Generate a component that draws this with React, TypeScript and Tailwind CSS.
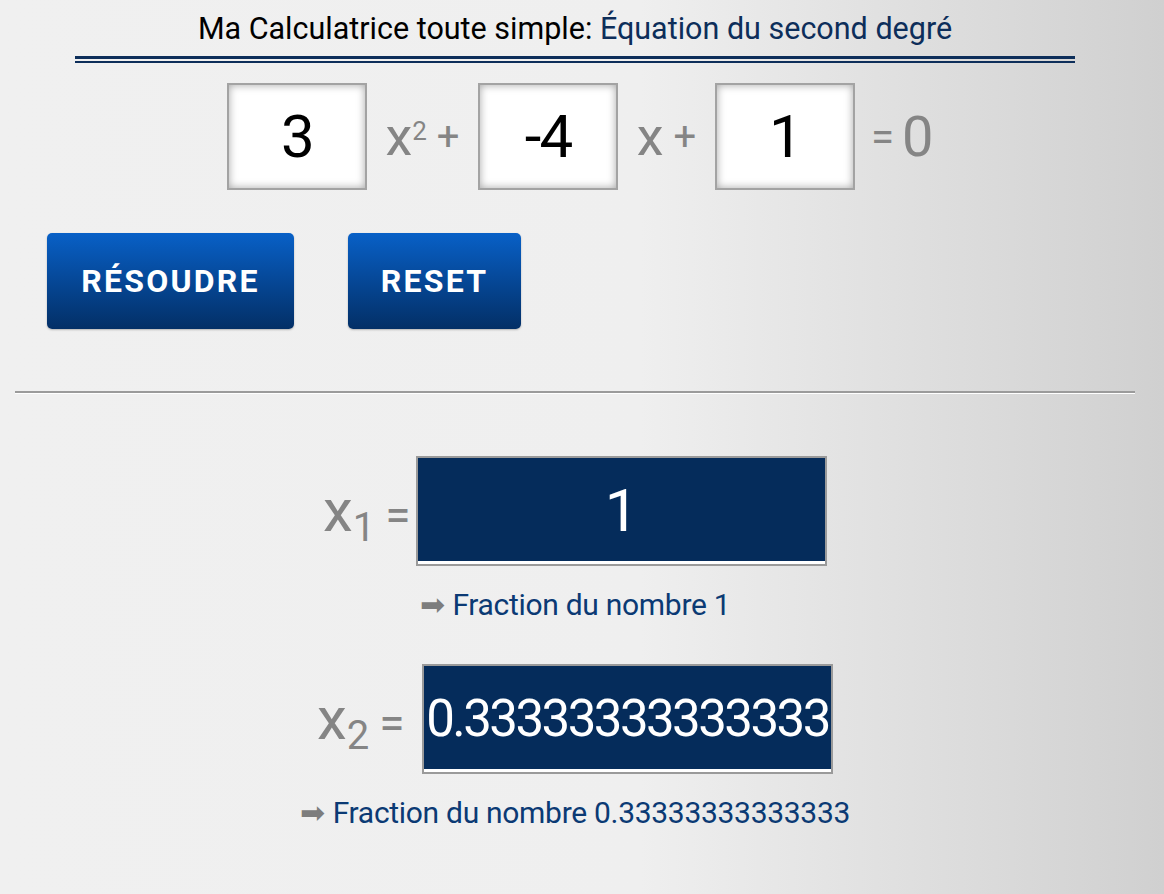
import React from "react";

const font = { fontFamily: 'Roboto, "Liberation Sans", sans-serif' };

function CoefBox({ value }: { value: string }) {
  return (
    <div className="flex h-[107px] w-[140px] items-center justify-center border-2 border-[#a3a3a3] bg-white text-[60px] tracking-[-0.03em] text-black shadow-[inset_0_0_9px_rgba(0,0,0,0.35)]">
      {value}
    </div>
  );
}

function Result({
  sub,
  value,
  fraction,
  labelWidth,
  size,
}: {
  sub: string;
  value: string;
  fraction: string;
  labelWidth: string;
  size: string;
}) {
  return (
    <div className="flex flex-col items-center">
      <div className="flex items-center">
        <span className={`flex items-baseline text-[60px] leading-none text-[#858585] ${labelWidth}`}>
          x
          <sub className="relative top-[10px] text-[40px] leading-none">{sub}</sub>
          <span className="ml-[10px] text-[46px]">=</span>
        </span>
        <div
          className={`flex h-[110px] w-[411px] items-center justify-center overflow-hidden whitespace-nowrap border-2 border-[#9a9a9a] bg-[#052c5b] text-white shadow-[inset_0_-3px_0_#ffffff] ${size}`}
        >
          {value}
        </div>
      </div>
      <p className="mt-[22px] text-[30px] leading-[34px] tracking-[-0.01em] text-[#0b3a74]">
        <span className="mr-[8px] text-[#7d7d7d]">➡</span>
        {fraction}
      </p>
    </div>
  );
}

export default function App() {
  return (
    <div
      className="min-h-[894px] w-full bg-[linear-gradient(to_right,#f0f0f0_0%,#efefef_55%,#d0d0d0_100%)] pt-[10px]"
      style={font}
    >
      <div className="ml-[15px] w-[1120px]">
        <h1 className="text-center text-[30.5px] leading-[38px] text-black">
          Ma Calculatrice toute simple: <span className="text-[#0d2e5a]">Équation du second degré</span>
        </h1>

        <div className="mx-[60px] mt-[8px] flex flex-col gap-[2px]">
          <div className="h-[3px] bg-[#0d2e5a]" />
          <div className="h-[2px] bg-[#0d2e5a]" />
        </div>

        <div className="ml-[212px] mt-[20px] flex items-center">
          <CoefBox value="3" />
          <span className="flex w-[111px] items-center justify-center text-[54px] text-[#858585]">
            x<sup className="relative -top-[6px] text-[26px]">2</sup>
            <span className="ml-[10px] text-[40px]">+</span>
          </span>
          <CoefBox value="-4" />
          <span className="flex w-[97px] items-center justify-center text-[54px] text-[#858585]">
            x<span className="ml-[10px] text-[40px]">+</span>
          </span>
          <CoefBox value="1" />
          <span className="ml-[16px] flex items-center text-[56px] text-[#858585]">
            <span className="text-[42px]">=</span>
            <span className="ml-[8px]">0</span>
          </span>
        </div>

        <div className="ml-[32px] mt-[43px] flex gap-[54px]">
          <button className="h-[96px] w-[247px] rounded-[5px] bg-[linear-gradient(to_bottom,#0860c7,#032f66)] text-[32px] font-bold tracking-[0.07em] text-white shadow-[0_1px_2px_rgba(0,0,0,0.25)]">
            RÉSOUDRE
          </button>
          <button className="h-[96px] w-[173px] rounded-[5px] bg-[linear-gradient(to_bottom,#0860c7,#032f66)] text-[32px] font-bold tracking-[0.07em] text-white shadow-[0_1px_2px_rgba(0,0,0,0.25)]">
            RESET
          </button>
        </div>

        <div className="mt-[62px] border-t-2 border-b border-t-[#9b9b9b] border-b-white" />

        <div className="mt-[62px] flex flex-col items-center gap-[42px]">
          <Result sub="1" value="1" fraction="Fraction du nombre 1" labelWidth="w-[93px]" size="text-[60px]" />
          <Result
            sub="2"
            value="0.33333333333333"
            fraction="Fraction du nombre 0.33333333333333"
            labelWidth="w-[105px]"
            size="text-[51px] tracking-[-0.05em]"
          />
        </div>
      </div>
    </div>
  );
}
